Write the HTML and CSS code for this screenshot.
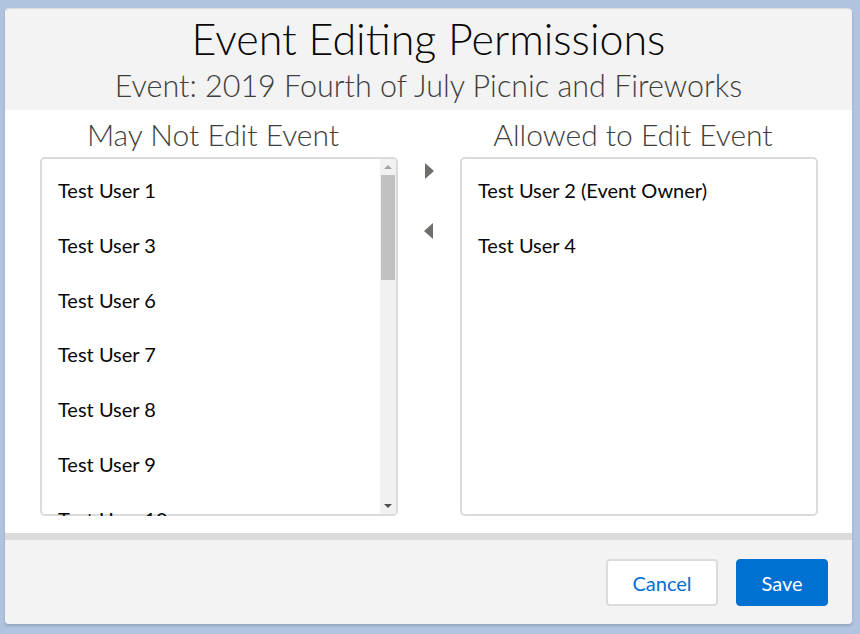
FILE: index.html
```html
<!DOCTYPE html>
<html lang="en">
<head>
<meta charset="utf-8">
<title>Event Editing Permissions</title>
<link rel="stylesheet" href="styles.css">
</head>
<body>
<div class="modal">
  <header class="modal-header">
    <h1 class="title">Event Editing Permissions</h1>
    <h2 class="subtitle">Event: 2019 Fourth of July Picnic and Fireworks</h2>
  </header>
  <section class="modal-body">
    <div class="column">
      <h3 class="col-heading">May Not Edit Event</h3>
      <div class="listbox">
        <ul class="items">
          <li class="item">Test User 1</li>
          <li class="item">Test User 3</li>
          <li class="item">Test User 6</li>
          <li class="item">Test User 7</li>
          <li class="item">Test User 8</li>
          <li class="item">Test User 9</li>
          <li class="item">Test User 10</li>
          <li class="item">Test User 11</li>
        </ul>
        <div class="scrollbar">
          <span class="sb-btn sb-up"></span>
          <div class="sb-track"><div class="sb-thumb"></div></div>
          <span class="sb-btn sb-down"></span>
        </div>
      </div>
    </div>
    <div class="movers">
      <span class="arrow arrow-right"></span>
      <span class="arrow arrow-left"></span>
    </div>
    <div class="column">
      <h3 class="col-heading">Allowed to Edit Event</h3>
      <div class="listbox">
        <ul class="items">
          <li class="item">Test User 2 (Event Owner)</li>
          <li class="item">Test User 4</li>
        </ul>
      </div>
    </div>
  </section>
  <footer class="modal-footer">
    <button class="btn btn-neutral">Cancel</button>
    <button class="btn btn-brand">Save</button>
  </footer>
</div>
</body>
</html>
```

FILE: styles.css
```css
* { box-sizing: border-box; }
html, body { margin: 0; padding: 0; }
body {
  background: #b0c4df;
  width: 860px;
  height: 634px;
  overflow: hidden;
  font-family: Lato, "Open Sans", sans-serif;
  color: #16325c;
  padding: 8px 8px 0 5px;
}
.modal {
  width: 847px;
  border-radius: 4px;
  overflow: hidden;
  box-shadow: 0 2px 3px rgba(0,0,0,0.16);
  border-top: 1px solid #dddbda;
}
.modal-header {
  background: #f3f3f3;
  height: 101px;
  text-align: center;
  padding-top: 6px;
}
.title {
  margin: 0;
  font-weight: 300;
  font-size: 43px;
  line-height: 48px;
  color: #080707;
}
.subtitle {
  margin: 5px 0 0;
  font-weight: 300;
  font-size: 30.5px;
  line-height: 34px;
  color: #3e3e3c;
}
.modal-body {
  background: #fff;
  height: 423px;
  display: flex;
  padding: 8px 34px 0 35px;
}
.column {
  width: 358px;
  display: flex;
  flex-direction: column;
}
.col-heading {
  margin: 0 0 7px;
  text-align: center;
  font-weight: 300;
  font-size: 30px;
  line-height: 32px;
  color: #3e3e3c;
  padding-right: 12px;
}
.listbox {
  height: 359px;
  border: 2px solid #dddbda;
  border-radius: 5px;
  display: flex;
}
.items {
  list-style: none;
  margin: 0;
  padding: 4px 0 0 16px;
  flex: 1;
  overflow: clip;
  overflow-clip-margin: 2px;
}
.item {
  height: 54.75px;
  line-height: 54.75px;
  font-size: 20px;
  color: #080707;
  white-space: nowrap;
}
.scrollbar {
  width: 16px;
  background: #f1f1f1;
  border-radius: 0 3px 3px 0;
  display: flex;
  flex-direction: column;
  align-items: center;
}
.sb-btn {
  height: 16px;
  width: 100%;
  display: flex;
  align-items: center;
  justify-content: center;
}
.sb-up::before {
  content: "";
  border-left: 4px solid transparent;
  border-right: 4px solid transparent;
  border-bottom: 4px solid #a3a3a3;
}
.sb-down::before {
  content: "";
  border-left: 4px solid transparent;
  border-right: 4px solid transparent;
  border-top: 4px solid #505050;
}
.sb-track {
  flex: 1;
  width: 100%;
  padding: 0 1px;
}
.sb-thumb {
  height: 105px;
  background: #c1c1c1;
}
.movers {
  width: 62px;
  display: flex;
  flex-direction: column;
  align-items: center;
  padding-top: 45px;
  gap: 44px;
}
.arrow {
  width: 0;
  height: 0;
  border-top: 8px solid transparent;
  border-bottom: 8px solid transparent;
}
.arrow-right {
  border-left: 9px solid #706e6b;
  margin-left: 0;
}
.arrow-left {
  border-right: 9px solid #706e6b;
  margin-left: -2px;
}
.modal-footer {
  background: #f3f3f3;
  border-top: 7px solid #dddbda;
  height: 91px;
  display: flex;
  justify-content: flex-end;
  align-items: flex-start;
  gap: 18px;
  padding: 19px 24px 0 0;
}
.btn {
  height: 47px;
  border-radius: 4px;
  font-family: Lato, "Open Sans", sans-serif;
  font-size: 20px;
  cursor: pointer;
}
.btn-neutral {
  width: 112px;
  background: #fff;
  border: 2px solid #dddbda;
  color: #0070d2;
}
.btn-brand {
  width: 92px;
  background: #0070d2;
  border: 1px solid #0070d2;
  color: #fff;
}
```
